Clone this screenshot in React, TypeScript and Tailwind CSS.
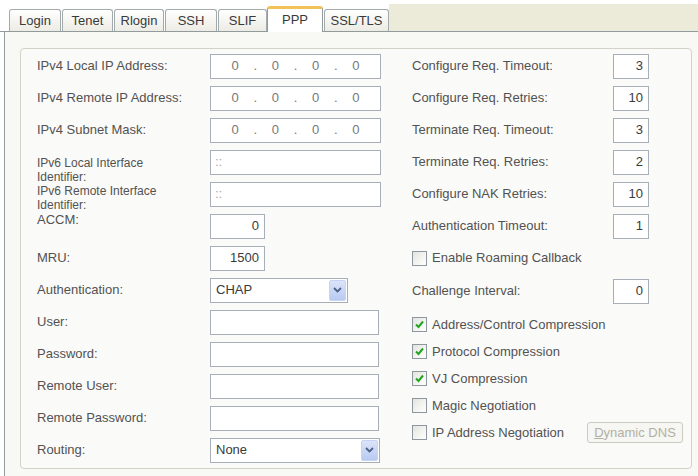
import React from 'react';

interface Tab {
    name: string;
    cls: string;
    active?: boolean;
}

const tabs: Tab[] = [
    { name: 'Login', cls: 'ml-[5px] w-[52px]' },
    { name: 'Tenet', cls: 'ml-px w-[51px]' },
    { name: 'Rlogin', cls: 'ml-px w-[50px]' },
    { name: 'SSH', cls: 'ml-px w-[52px]' },
    { name: 'SLIF', cls: 'ml-px w-[49px]' },
    { name: 'PPP', cls: 'w-[56px]', active: true },
    { name: 'SSL/TLS', cls: 'ml-px w-[65px]' },
];

// plain sunken edit box
const Box: React.FC<{ className?: string; children?: React.ReactNode }> = ({ className = '', children }) => (
    <div className={`h-[25px] border border-[#a7aeb8] bg-white flex items-center ${className}`}>{children}</div>
);

const IpBox = () => (
    <Box className="w-[171px] text-[#777] px-[6px]">
        {[0, 1, 2, 3].map((i) => (
            <React.Fragment key={i}>
                {i > 0 && <span className="w-[4px] text-center">.</span>}
                <span className="flex-1 text-center">0</span>
            </React.Fragment>
        ))}
    </Box>
);

const Combo: React.FC<{ value: string; className: string }> = ({ value, className }) => (
    <div className={`h-[25px] border border-[#a7aeb8] bg-white flex items-center pl-[5px] pr-px ${className}`}>
        <span className="flex-1 text-[#3a3a3a]">{value}</span>
        <div className="w-[17px] h-[21px] rounded-[2px] border border-[#c6d4f3] bg-gradient-to-b from-[#dbe4f9] to-[#b8caf2] flex items-center justify-center">
            <svg width="9" height="6" viewBox="0 0 9 6">
                <path d="M1 1 L4.5 4.5 L8 1" stroke="#4d6185" strokeWidth="1.8" fill="none" />
            </svg>
        </div>
    </div>
);

const Check: React.FC<{ checked?: boolean; label: string }> = ({ checked, label }) => (
    <div className="flex items-center gap-[5px]">
        <div className="w-[15px] h-[15px] border border-[#8e979f] bg-gradient-to-br from-[#e4e4de] to-white flex items-center justify-center">
            {checked && (
                <svg width="11" height="11" viewBox="0 0 11 11">
                    <path d="M2 5.5 L4.5 8 L9 2.5" stroke="#22a322" strokeWidth="2" fill="none" />
                </svg>
            )}
        </div>
        <span>{label}</span>
    </div>
);

const LeftRow: React.FC<{ label: React.ReactNode; labelCls?: string; children: React.ReactNode }> = ({
    label,
    labelCls = '',
    children,
}) => (
    <div className="h-[32px] flex items-center">
        <div className={`w-[173px] shrink-0 ${labelCls}`}>{label}</div>
        {children}
    </div>
);

const RightRow: React.FC<{ label: string; value: string }> = ({ label, value }) => (
    <div className="h-[32px] flex items-center">
        <div className="w-[201px] shrink-0">{label}</div>
        <Box className="w-[36px] justify-end pr-[5px] text-[#3a3a3a]">{value}</Box>
    </div>
);

export default function App() {
    return (
        <div className="w-[698px] h-[476px] overflow-hidden bg-white font-['Liberation_Sans',Arial,sans-serif] text-[13px] text-[#525252]">
            <div className="h-[4px]" />

            {/* tab strip */}
            <div className="h-[28px] flex items-end">
                <div className="h-full flex items-end pl-[4px] border-b border-[#919b9c]">
                    {tabs.map((t) =>
                        t.active ? (
                            <div
                                key={t.name}
                                className={`${t.cls} h-[26px] -mb-px relative z-10 bg-white border border-b-0 border-[#919b9c] border-t-[3px] border-t-[#f2c25a] rounded-t-[3px] flex justify-center pt-[1px] text-[#3a3a3a]`}
                            >
                                {t.name}
                            </div>
                        ) : (
                            <div
                                key={t.name}
                                className={`${t.cls} h-[22px] border border-b-0 border-[#a3aaab] rounded-t-[3px] bg-gradient-to-b from-white to-[#ecebe4] flex items-center justify-center text-[#3a3a3a]`}
                            >
                                {t.name}
                            </div>
                        ),
                    )}
                </div>
                <div className="flex-1 h-full bg-[#ecead9] border-b border-[#919b9c]" />
            </div>

            {/* tab page */}
            <div className="ml-[4px] h-[444px] border-l border-[#919b9c] bg-[#f8f8f5] pt-[16px] pl-[15px]">
                <div className="w-[672px] h-[421px] rounded-[4px] border border-[#d3d2c6] bg-[#fafaf8] flex pt-px">
                    <div className="w-[391px] pl-[16px]">
                        <LeftRow label="IPv4 Local IP Address:">
                            <IpBox />
                        </LeftRow>
                        <LeftRow label="IPv4 Remote IP Address:">
                            <IpBox />
                        </LeftRow>
                        <LeftRow label="IPv4 Subnet Mask:">
                            <IpBox />
                        </LeftRow>
                        <LeftRow
                            labelCls="self-start mt-[10px] text-[12px] leading-[14px]"
                            label={
                                <>
                                    IPv6 Local Interface
                                    <br />
                                    Identifier:
                                </>
                            }
                        >
                            <Box className="w-[171px] pl-[4px] text-[#aaa]">::</Box>
                        </LeftRow>
                        <LeftRow
                            labelCls="self-start mt-[6px] text-[12px] leading-[14px]"
                            label={
                                <>
                                    IPv6 Remote Interface
                                    <br />
                                    Identifier:
                                </>
                            }
                        >
                            <Box className="w-[171px] pl-[4px] text-[#aaa]">::</Box>
                        </LeftRow>
                        <LeftRow labelCls="self-start mt-[2px] leading-[15px]" label="ACCM:">
                            <Box className="w-[55px] justify-end pr-[5px] text-[#3a3a3a]">0</Box>
                        </LeftRow>
                        <LeftRow label="MRU:">
                            <Box className="w-[55px] justify-end pr-[5px] text-[#3a3a3a]">1500</Box>
                        </LeftRow>
                        <LeftRow label="Authentication:">
                            <Combo value="CHAP" className="w-[138px]" />
                        </LeftRow>
                        <LeftRow label="User:">
                            <Box className="w-[169px]" />
                        </LeftRow>
                        <LeftRow label="Password:">
                            <Box className="w-[169px]" />
                        </LeftRow>
                        <LeftRow label="Remote User:">
                            <Box className="w-[169px]" />
                        </LeftRow>
                        <LeftRow label="Remote Password:">
                            <Box className="w-[169px]" />
                        </LeftRow>
                        <LeftRow label="Routing:">
                            <Combo value="None" className="w-[170px]" />
                        </LeftRow>
                    </div>

                    <div className="w-[271px]">
                        <RightRow label="Configure Req. Timeout:" value="3" />
                        <RightRow label="Configure Req. Retries:" value="10" />
                        <RightRow label="Terminate Req. Timeout:" value="3" />
                        <RightRow label="Terminate Req. Retries:" value="2" />
                        <RightRow label="Configure NAK Retries:" value="10" />
                        <RightRow label="Authentication Timeout:" value="1" />
                        <div className="h-[32px] flex items-center">
                            <Check label="Enable Roaming Callback" />
                        </div>
                        <div className="h-[34px] flex items-center">
                            <div className="w-[201px] shrink-0">Challenge Interval:</div>
                            <Box className="w-[36px] justify-end pr-[5px] text-[#3a3a3a]">0</Box>
                        </div>
                        <div className="mt-[3px]">
                            <div className="h-[27px] flex items-center">
                                <Check checked label="Address/Control Compression" />
                            </div>
                            <div className="h-[27px] flex items-center">
                                <Check checked label="Protocol Compression" />
                            </div>
                            <div className="h-[27px] flex items-center">
                                <Check checked label="VJ Compression" />
                            </div>
                            <div className="h-[27px] flex items-center">
                                <Check label="Magic Negotiation" />
                            </div>
                            <div className="h-[27px] flex items-center justify-between">
                                <Check label="IP Address Negotiation" />
                                <button
                                    disabled
                                    className="w-[96px] h-[21px] rounded-[3px] border border-[#cdcbbf] bg-[#f6f6f2] text-[#b3b0a3] text-[13px]"
                                >
                                    <span className="underline">D</span>ynamic DNS
                                </button>
                            </div>
                        </div>
                    </div>
                </div>
            </div>
        </div>
    );
}
